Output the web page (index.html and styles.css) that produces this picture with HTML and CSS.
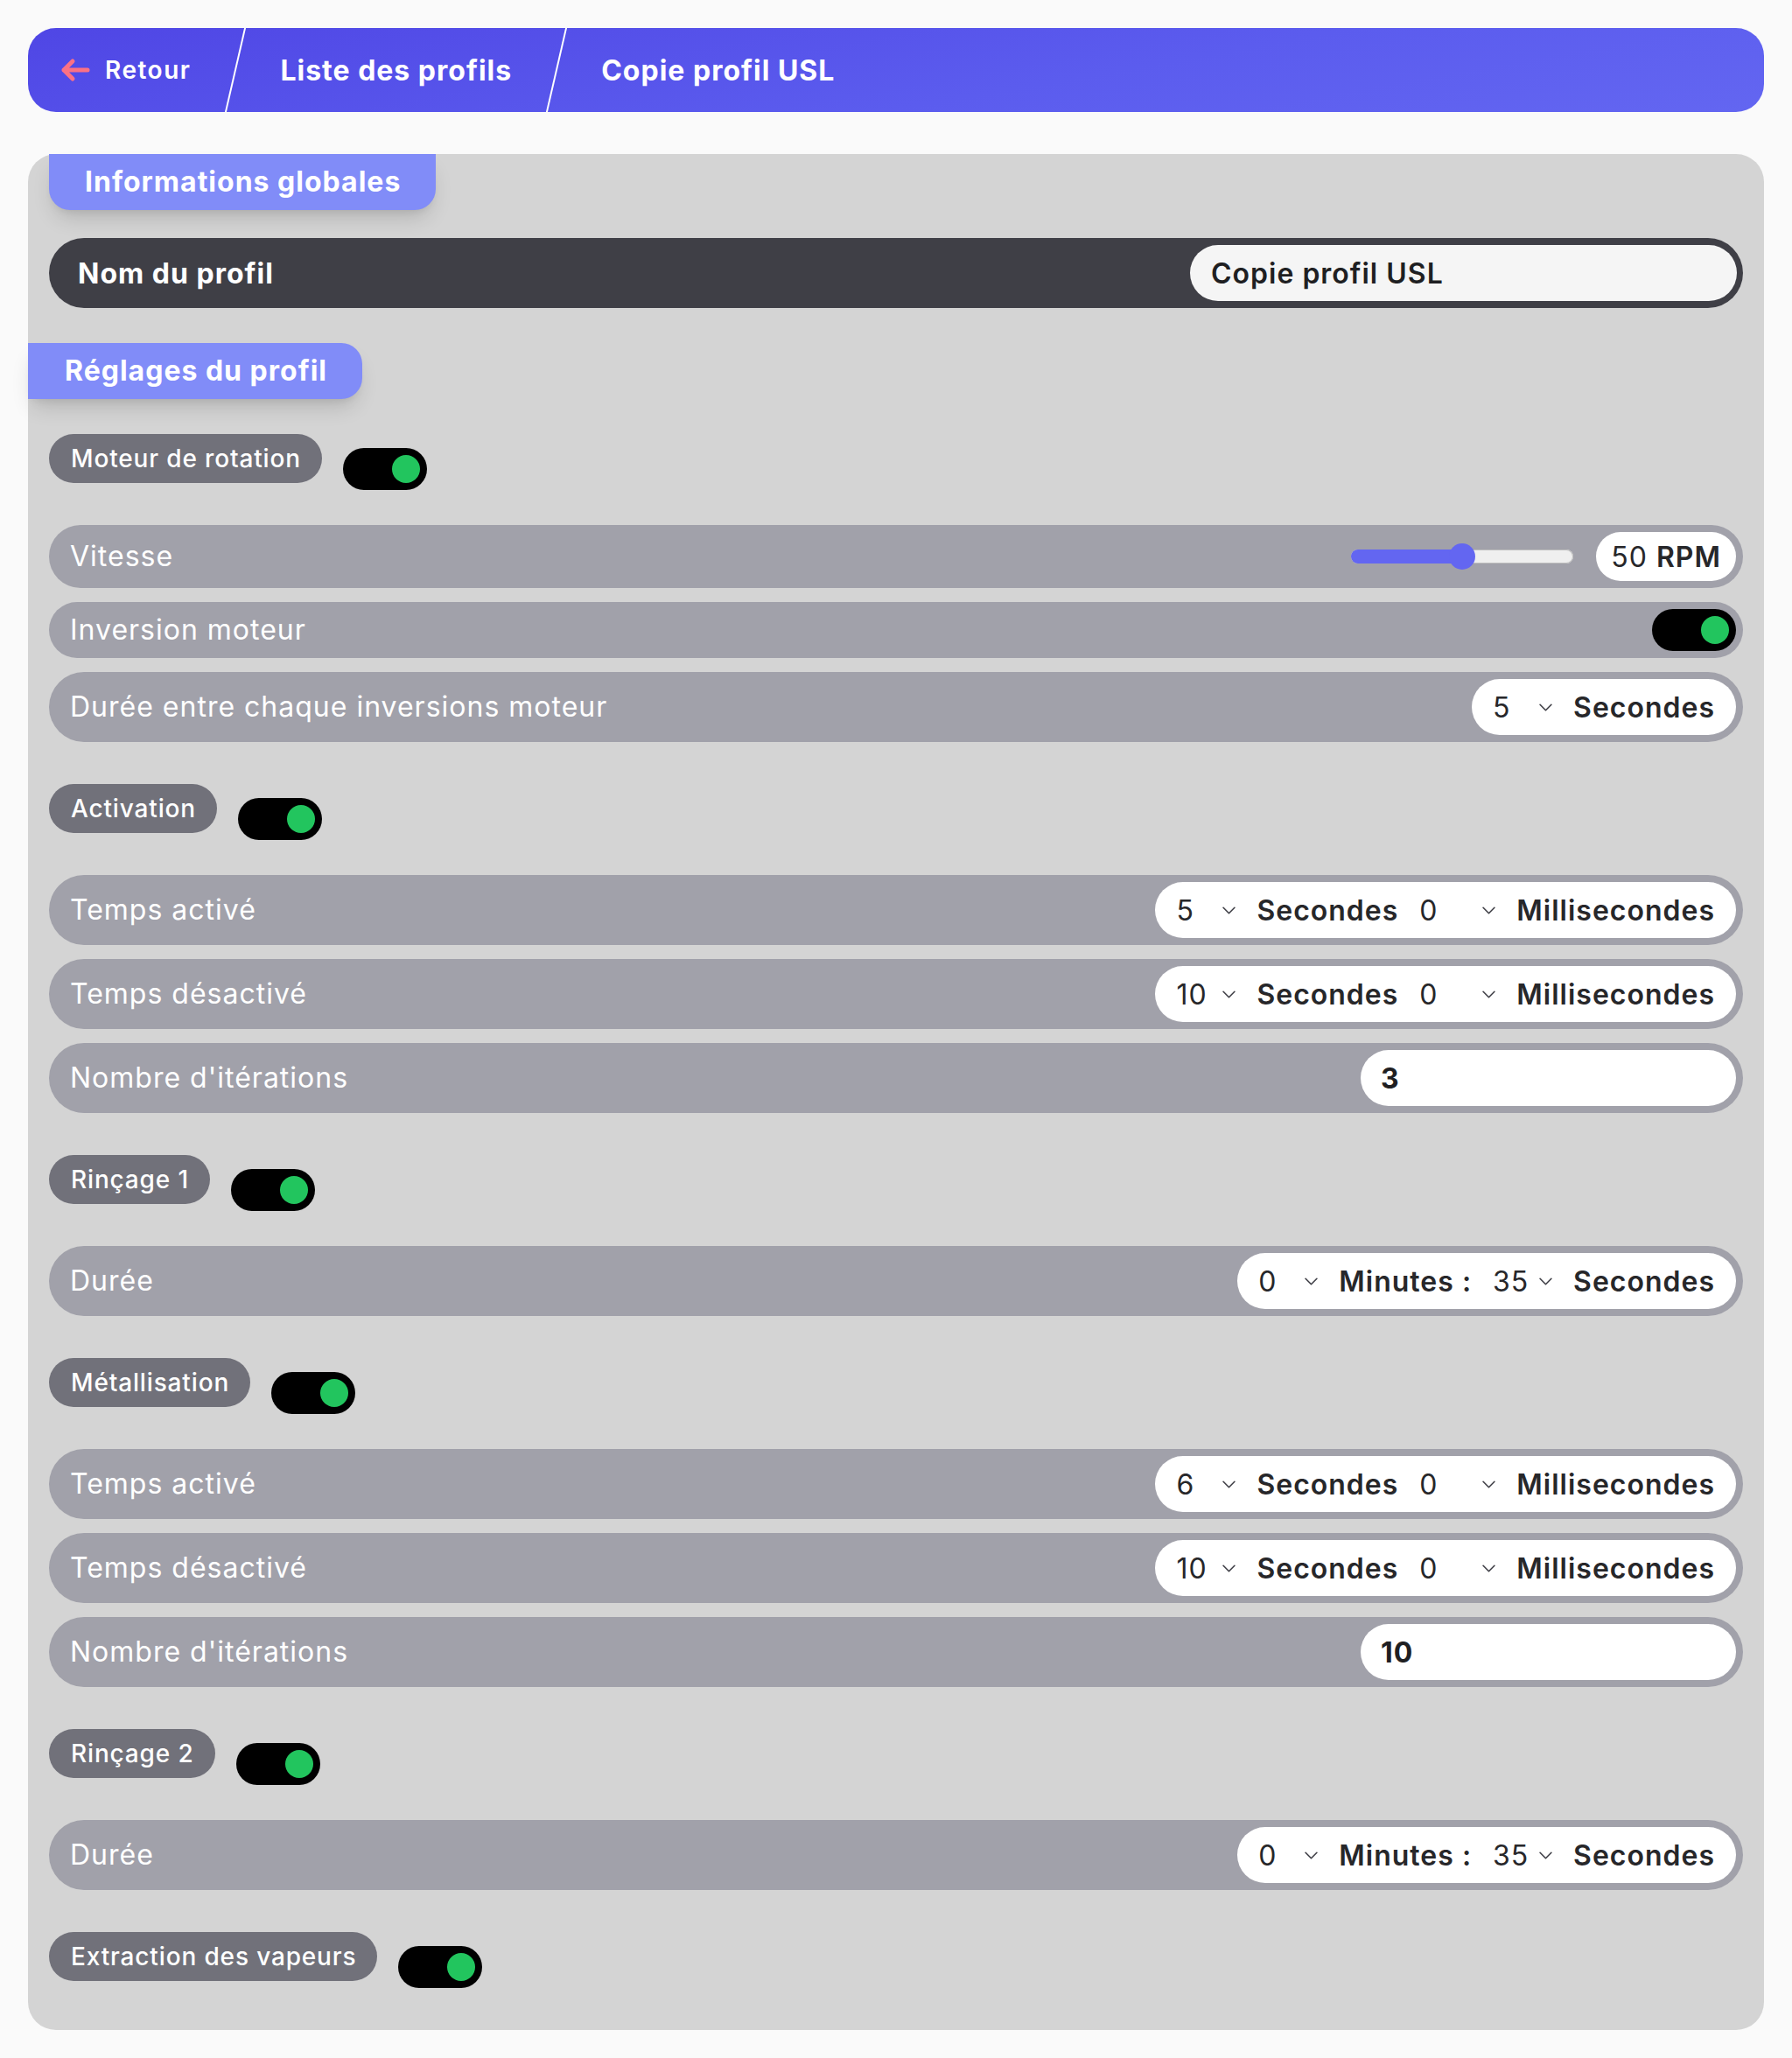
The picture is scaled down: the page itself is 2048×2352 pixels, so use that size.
FILE: index.html
```html
<!DOCTYPE html>
<html lang="fr">
<head>
<meta charset="utf-8">
<title>Copie profil USL</title>
<link rel="stylesheet" href="styles.css">
</head>
<body>
<div class="page">
  <nav class="crumbs">
    <a class="crumb crumb-back" href="#">
      <svg class="back-icon" viewBox="0 0 36 28" aria-hidden="true"><path d="M15 4 L5 14 L15 24 M5 14 H32" fill="none" stroke="#fb7185" stroke-width="5" stroke-linecap="round" stroke-linejoin="round"/></svg>
      Retour
    </a>
    <span class="sep"></span>
    <a class="crumb" href="#">Liste des profils</a>
    <span class="sep"></span>
    <span class="crumb">Copie profil USL</span>
  </nav>

  <main class="card">
    <div class="tab tab-info">Informations globales</div>
    <div class="name-bar">
      <span class="name-label">Nom du profil</span>
      <div class="text-input name-input">Copie profil USL</div>
    </div>

    <div class="tab tab-settings">Réglages du profil</div>

    <section class="group">
      <div class="group-head"><span class="chip">Moteur de rotation</span><span class="toggle"><span class="knob"></span></span></div>
      <div class="rows">
        <div class="row">
          <span class="row-label">Vitesse</span>
          <div class="slider-wrap">
            <div class="slider"><span class="slider-fill"></span><span class="slider-thumb"></span></div>
            <div class="pill pill-rpm">50&nbsp;<span class="unit">RPM</span></div>
          </div>
        </div>
        <div class="row">
          <span class="row-label">Inversion moteur</span>
          <span class="toggle"><span class="knob"></span></span>
        </div>
        <div class="row">
          <span class="row-label">Durée entre chaque inversions moteur</span>
          <div class="pill">
            <span class="sel">5<svg viewBox="0 0 14 8"><polyline points="1,1 7,7 13,1"/></svg></span>
            <span class="unit">Secondes</span>
          </div>
        </div>
      </div>
    </section>

    <section class="group">
      <div class="group-head"><span class="chip">Activation</span><span class="toggle"><span class="knob"></span></span></div>
      <div class="rows">
        <div class="row">
          <span class="row-label">Temps activé</span>
          <div class="pill">
            <span class="sel">5<svg viewBox="0 0 14 8"><polyline points="1,1 7,7 13,1"/></svg></span>
            <span class="unit">Secondes</span>
            <span class="sel sel-wide">0<svg viewBox="0 0 14 8"><polyline points="1,1 7,7 13,1"/></svg></span>
            <span class="unit">Millisecondes</span>
          </div>
        </div>
        <div class="row">
          <span class="row-label">Temps désactivé</span>
          <div class="pill">
            <span class="sel">10<svg viewBox="0 0 14 8"><polyline points="1,1 7,7 13,1"/></svg></span>
            <span class="unit">Secondes</span>
            <span class="sel sel-wide">0<svg viewBox="0 0 14 8"><polyline points="1,1 7,7 13,1"/></svg></span>
            <span class="unit">Millisecondes</span>
          </div>
        </div>
        <div class="row">
          <span class="row-label">Nombre d'itérations</span>
          <div class="text-input num-input">3</div>
        </div>
      </div>
    </section>

    <section class="group">
      <div class="group-head"><span class="chip">Rinçage 1</span><span class="toggle"><span class="knob"></span></span></div>
      <div class="rows">
        <div class="row">
          <span class="row-label">Durée</span>
          <div class="pill">
            <span class="sel">0<svg viewBox="0 0 14 8"><polyline points="1,1 7,7 13,1"/></svg></span>
            <span class="unit">Minutes :</span>
            <span class="sel">35<svg viewBox="0 0 14 8"><polyline points="1,1 7,7 13,1"/></svg></span>
            <span class="unit">Secondes</span>
          </div>
        </div>
      </div>
    </section>

    <section class="group">
      <div class="group-head"><span class="chip">Métallisation</span><span class="toggle"><span class="knob"></span></span></div>
      <div class="rows">
        <div class="row">
          <span class="row-label">Temps activé</span>
          <div class="pill">
            <span class="sel">6<svg viewBox="0 0 14 8"><polyline points="1,1 7,7 13,1"/></svg></span>
            <span class="unit">Secondes</span>
            <span class="sel sel-wide">0<svg viewBox="0 0 14 8"><polyline points="1,1 7,7 13,1"/></svg></span>
            <span class="unit">Millisecondes</span>
          </div>
        </div>
        <div class="row">
          <span class="row-label">Temps désactivé</span>
          <div class="pill">
            <span class="sel">10<svg viewBox="0 0 14 8"><polyline points="1,1 7,7 13,1"/></svg></span>
            <span class="unit">Secondes</span>
            <span class="sel sel-wide">0<svg viewBox="0 0 14 8"><polyline points="1,1 7,7 13,1"/></svg></span>
            <span class="unit">Millisecondes</span>
          </div>
        </div>
        <div class="row">
          <span class="row-label">Nombre d'itérations</span>
          <div class="text-input num-input">10</div>
        </div>
      </div>
    </section>

    <section class="group">
      <div class="group-head"><span class="chip">Rinçage 2</span><span class="toggle"><span class="knob"></span></span></div>
      <div class="rows">
        <div class="row">
          <span class="row-label">Durée</span>
          <div class="pill">
            <span class="sel">0<svg viewBox="0 0 14 8"><polyline points="1,1 7,7 13,1"/></svg></span>
            <span class="unit">Minutes :</span>
            <span class="sel">35<svg viewBox="0 0 14 8"><polyline points="1,1 7,7 13,1"/></svg></span>
            <span class="unit">Secondes</span>
          </div>
        </div>
      </div>
    </section>

    <section class="group">
      <div class="group-head"><span class="chip">Extraction des vapeurs</span><span class="toggle"><span class="knob"></span></span></div>
    </section>
  </main>
</div>
</body>
</html>
```

FILE: styles.css
```css
* { box-sizing: border-box; }

body {
  margin: 0;
  background: #fafafa;
  font-family: Inter, "Noto Sans", sans-serif;
  letter-spacing: 1px;
  color: #27272a;
}

.page {
  padding: 32px 32px 33px;
}

/* ---------- breadcrumb bar ---------- */
.crumbs {
  display: flex;
  align-items: stretch;
  height: 96px;
  border-radius: 32px;
  padding-left: 36px;
  background: linear-gradient(170deg, #4f46e5 0%, #5b5cee 60%, #6366f1 100%);
}

.crumb {
  display: flex;
  align-items: center;
  color: #fff;
  text-decoration: none;
  font-size: 32px;
  font-weight: 700;
  letter-spacing: 1px;
  white-space: nowrap;
}

.crumb-back {
  font-size: 28px;
  font-weight: 600;
  letter-spacing: 1.5px;
  gap: 16px;
}

.back-icon {
  width: 36px;
  height: 28px;
}

.sep {
  width: 2px;
  margin: 0 50px;
  background: #fff;
  transform: skewX(-13deg);
}

/* ---------- card ---------- */
.card {
  margin-top: 48px;
  background: #d4d4d4;
  border-radius: 32px;
  padding: 0 24px 48px;
  display: flex;
  flex-direction: column;
}

.tab {
  align-self: flex-start;
  background: #818cf8;
  color: #fff;
  font-size: 32px;
  font-weight: 700;
  line-height: 40px;
  padding: 12px 40px 12px 41px;
  box-shadow: 0 14px 24px -6px rgba(0, 0, 0, 0.16), 0 6px 10px -6px rgba(0, 0, 0, 0.1);
}

.tab-info {
  border-radius: 0 0 24px 24px;
}

.tab-settings {
  margin-top: 40px;
  margin-left: -24px;
  padding-left: 42px;
  border-radius: 0 24px 24px 0;
}

.name-bar {
  margin-top: 32px;
  display: flex;
  align-items: center;
  justify-content: space-between;
  background: #3f3f46;
  border-radius: 999px;
  padding: 8px 7px 8px 33px;
}

.name-label {
  color: #fff;
  font-size: 32px;
  font-weight: 700;
}

.text-input {
  height: 64px;
  border-radius: 999px;
  display: flex;
  align-items: center;
  padding: 0 24px;
  font-size: 32px;
  color: #1f1f22;
}

.name-input {
  width: 625px;
  background: #f5f5f5;
  font-weight: 600;
}

.num-input {
  width: 429px;
  background: #fff;
  font-weight: 700;
  padding-left: 23px;
}

/* ---------- groups ---------- */
.group {
  margin-top: 40px;
}

.group + .group {
  margin-top: 48px;
}

.group-head {
  display: flex;
  align-items: flex-start;
  gap: 24px;
  height: 64px;
}

.chip {
  height: 56px;
  display: flex;
  align-items: center;
  padding: 0 24px 0 25px;
  border-radius: 999px;
  background: #71717a;
  color: #fff;
  font-size: 28px;
  font-weight: 500;
  letter-spacing: 0.85px;
  white-space: nowrap;
}

.group-head .toggle {
  margin-top: 16px;
}

.toggle {
  width: 96px;
  height: 48px;
  flex: none;
  border-radius: 999px;
  background: #000;
  display: flex;
  align-items: center;
  justify-content: flex-end;
  padding: 0 8px;
}

.knob {
  width: 32px;
  height: 32px;
  border-radius: 50%;
  background: #22c55e;
}

.rows {
  margin-top: 40px;
  display: flex;
  flex-direction: column;
  gap: 16px;
}

.row {
  display: flex;
  align-items: center;
  justify-content: space-between;
  background: #a1a1aa;
  border-radius: 999px;
  padding: 8px 8px 8px 24px;
}

.row-label {
  color: #fff;
  font-size: 32px;
  line-height: 40px;
  font-weight: 400;
}

/* ---------- slider ---------- */
.slider-wrap {
  display: flex;
  align-items: center;
  gap: 26px;
}

.slider {
  position: relative;
  width: 254px;
  height: 16px;
  border-radius: 999px;
  background: #efefef;
  box-shadow: inset 0 0 0 1px #bdbdbd;
  display: flex;
}

.slider-fill {
  width: 50%;
  border-radius: 999px 0 0 999px;
  background: #6366f1;
}

.slider-thumb {
  position: absolute;
  left: calc(50% - 15px);
  top: 50%;
  width: 30px;
  height: 30px;
  margin-top: -15px;
  border-radius: 50%;
  background: #6366f1;
}

/* ---------- value pills ---------- */
.pill {
  height: 64px;
  display: flex;
  align-items: center;
  gap: 16px;
  padding: 0 24px;
  border-radius: 999px;
  background: #fff;
  font-size: 32px;
  color: #27272a;
  white-space: nowrap;
}

.pill-rpm {
  height: 56px;
  gap: 0;
  padding: 0 17px;
}

.unit {
  font-weight: 600;
}

.sel {
  display: flex;
  align-items: center;
  justify-content: space-between;
  width: 76px;
  padding-right: 8px;
  font-weight: 400;
}

.sel-wide {
  width: 95px;
}

.unit + .sel {
  margin-left: 8px;
}

.sel svg {
  width: 15px;
  height: 9px;
  fill: none;
  stroke: #3f3f46;
  stroke-width: 1.5;
  stroke-linecap: round;
  stroke-linejoin: round;
}
```
